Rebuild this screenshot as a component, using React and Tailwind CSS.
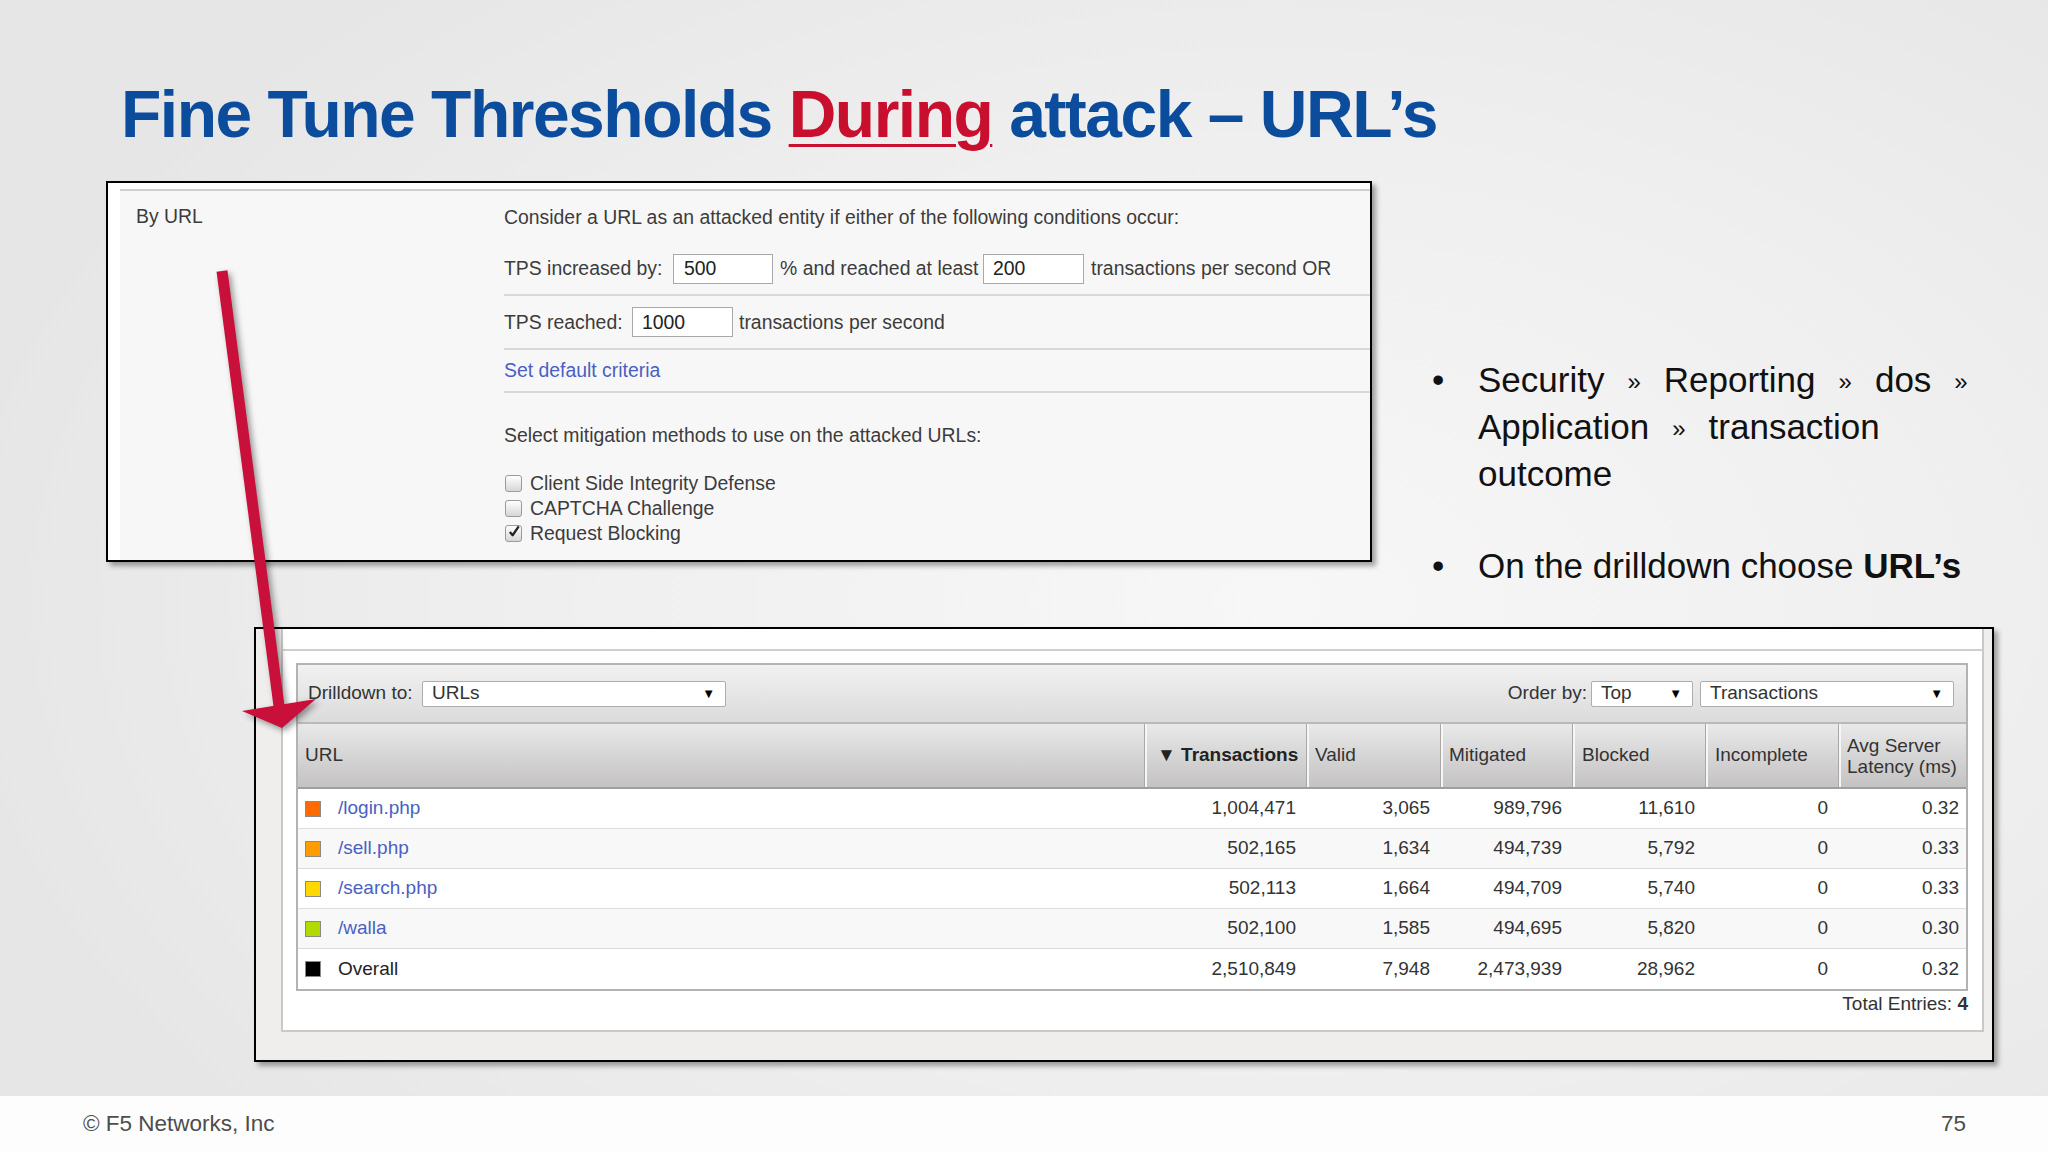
import React from "react";

const rows = [
  { url: "/login.php", color: "bg-[#ff6a00]", link: true, vals: ["1,004,471", "3,065", "989,796", "11,610", "0", "0.32"] },
  { url: "/sell.php", color: "bg-[#ff9c00]", link: true, vals: ["502,165", "1,634", "494,739", "5,792", "0", "0.33"] },
  { url: "/search.php", color: "bg-[#ffd800]", link: true, vals: ["502,113", "1,664", "494,709", "5,740", "0", "0.33"] },
  { url: "/walla", color: "bg-[#b2d900]", link: true, vals: ["502,100", "1,585", "494,695", "5,820", "0", "0.30"] },
  { url: "Overall", color: "bg-black", link: false, vals: ["2,510,849", "7,948", "2,473,939", "28,962", "0", "0.32"] },
];

const colW = ["w-[162px]", "w-[134px]", "w-[132px]", "w-[133px]", "w-[133px]", "w-[128px]"];

const Checkbox = ({ checked }) => (
  <span className="relative w-[17px] h-[17px] rounded-[3px] border border-[#9a9a9a] bg-linear-to-b from-white to-[#d6d6d6] shrink-0">
    {checked && (
      <svg viewBox="0 0 16 16" className="absolute left-[1px] top-[-2px] w-[15px] h-[15px]">
        <path d="M3 8.5 L6 12 L12.5 2.5" fill="none" stroke="#222" strokeWidth="2.4" strokeLinejoin="round" />
      </svg>
    )}
  </span>
);

const Select = ({ value, className }) => (
  <div className={`h-[26px] bg-white border border-[#adadad] rounded-[2px] flex items-center justify-between pl-[9px] pr-[10px] text-[19px] text-[#333] ${className}`}>
    <span>{value}</span>
    <span className="text-[13px] text-black">▼</span>
  </div>
);

const Sep = () => <span className="inline-block mx-[23px] text-[24px] align-[2px]">»</span>;

export default function App() {
  return (
    <div className="relative w-[2048px] h-[1152px] overflow-hidden flex flex-col font-['Liberation_Sans',Arial,sans-serif]">
      <div className="relative h-[1096px] bg-[radial-gradient(ellipse_65%_75%_at_62%_55%,#f7f7f8_0%,#efeff0_55%,#e6e6e7_100%)]">
        {/* title */}
        <h1 className="pt-[81px] pl-[121px] text-[66px] leading-[66px] font-bold tracking-[-1.5px] text-[#0b4c9c]">
          Fine Tune Thresholds{" "}
          <span className="text-[#c8102e] underline decoration-[3px] underline-offset-[7px]">During</span>{" "}
          attack – URL’s
        </h1>

        <div className="flex items-start mt-[34px]">
          {/* By URL panel */}
          <div className="ml-[106px] w-[1266px] h-[381px] border-2 border-black bg-white pl-[12px] pt-[6px] flex shadow-[4px_4px_5px_rgba(0,0,0,0.35)] text-[19.4px] leading-[23px] text-[#3c3c3c] shrink-0">
            <div className="flex-1 flex border-t-2 border-[#cfcfcf] bg-[#f8f7f7]">
              <div className="w-[384px] pt-[14px] pl-[16px]">By URL</div>
              <div className="flex-1 flex flex-col">
                <div className="h-[52px] flex items-center">
                  Consider a URL as an attacked entity if either of the following conditions occur:
                </div>
                <div className="h-[53px] flex items-center border-b-2 border-[#d8d8d8]">
                  <span className="w-[169px]">TPS increased by:</span>
                  <span className="w-[100px] h-[30px] bg-white border border-[#a9a9a9] pl-[10px] flex items-center text-[#222]">500</span>
                  <span className="ml-[7px] w-[203px]">% and reached at least</span>
                  <span className="w-[101px] h-[30px] bg-white border border-[#a9a9a9] pl-[9px] flex items-center text-[#222]">200</span>
                  <span className="ml-[7px]">transactions per second OR</span>
                </div>
                <div className="h-[54px] flex items-center border-b-2 border-[#d8d8d8]">
                  <span className="w-[128px]">TPS reached:</span>
                  <span className="w-[101px] h-[30px] bg-white border border-[#a9a9a9] pl-[9px] flex items-center text-[#222]">1000</span>
                  <span className="ml-[6px]">transactions per second</span>
                </div>
                <div className="h-[43px] flex items-center border-b-2 border-[#d8d8d8] text-[#4a5fc4]">
                  Set default criteria
                </div>
                <div className="pt-[31px]">Select mitigation methods to use on the attacked URLs:</div>
                <div className="mt-[24px] flex flex-col leading-[25px] pl-[1px]">
                  <div className="flex items-center gap-[8px]"><Checkbox />Client Side Integrity Defense</div>
                  <div className="flex items-center gap-[8px]"><Checkbox />CAPTCHA Challenge</div>
                  <div className="flex items-center gap-[8px]"><Checkbox checked />Request Blocking</div>
                </div>
              </div>
            </div>
          </div>

          {/* bullets */}
          <div className="ml-[60px] pt-[176px] text-[35px] leading-[45px] text-[#111]">
            <div className="flex">
              <span className="w-[46px]">•</span>
              <div>
                Security<Sep />Reporting<Sep />dos<Sep />
                <br />
                Application<Sep />transaction
                <br />
                outcome
              </div>
            </div>
            <div className="flex mt-[47px]">
              <span className="w-[46px]">•</span>
              <div>
                On the drilldown choose <span className="font-bold">URL’s</span>
              </div>
            </div>
          </div>
        </div>

        {/* report panel */}
        <div className="mt-[39px] ml-[254px] w-[1740px] h-[435px] border-2 border-black bg-[#efeeed] pl-[25px] pr-[8px] pb-[28px] flex flex-col shadow-[4px_4px_5px_rgba(0,0,0,0.35)] text-[19px] text-[#333]">
          <div className="flex-1 flex flex-col bg-white border-x-2 border-b-2 border-[#c9c9c9]">
            <div className="h-[22px] border-b-2 border-[#cfcfcf]" />
            <div className="mt-[12px] ml-[13px] mr-[14px] flex flex-col">
              <div className="border-2 border-[#b3b3b3] flex flex-col">
                {/* toolbar */}
                <div className="h-[59px] border-b-2 border-[#b9b9b9] bg-linear-to-b from-[#f1f1f1] to-[#dbdbdb] flex items-center justify-between pl-[10px] pr-[12px]">
                  <div className="flex items-center">
                    <span className="w-[114px]">Drilldown to:</span>
                    <Select value="URLs" className="w-[304px]" />
                  </div>
                  <div className="flex items-center">
                    <span className="mr-[4px]">Order by:</span>
                    <Select value="Top" className="w-[102px]" />
                    <Select value="Transactions" className="w-[254px] ml-[7px]" />
                  </div>
                </div>
                {/* header */}
                <div className="h-[65px] border-b-2 border-[#9f9f9f] bg-linear-to-b from-[#e9e9e9] to-[#c4c2c2] flex text-[#333]">
                  <div className="w-[846px] pl-[7px] flex items-center">URL</div>
                  <div className={`${colW[0]} pl-[12px] flex items-center border-l border-[#a8a8a8] shadow-[inset_2px_0_0_#f6f6f6] font-bold text-[#222]`}>▼ Transactions</div>
                  <div className={`${colW[1]} pl-[8px] flex items-center border-l border-[#a8a8a8] shadow-[inset_2px_0_0_#f6f6f6]`}>Valid</div>
                  <div className={`${colW[2]} pl-[8px] flex items-center border-l border-[#a8a8a8] shadow-[inset_2px_0_0_#f6f6f6]`}>Mitigated</div>
                  <div className={`${colW[3]} pl-[9px] flex items-center border-l border-[#a8a8a8] shadow-[inset_2px_0_0_#f6f6f6]`}>Blocked</div>
                  <div className={`${colW[4]} pl-[9px] flex items-center border-l border-[#a8a8a8] shadow-[inset_2px_0_0_#f6f6f6]`}>Incomplete</div>
                  <div className={`${colW[5]} pl-[8px] flex items-center border-l border-[#a8a8a8] shadow-[inset_2px_0_0_#f6f6f6] leading-[21px]`}>
                    Avg Server
                    <br />
                    Latency (ms)
                  </div>
                </div>
                {/* rows */}
                {rows.map((r, i) => (
                  <div
                    key={r.url}
                    className={`h-[40px] flex items-center ${i % 2 ? "bg-[#f8f8f8]" : "bg-white"} ${i < rows.length - 1 ? "border-b border-[#dcdcdc]" : ""}`}
                  >
                    <div className="w-[846px] pl-[7px] flex items-center">
                      <span className={`w-[16px] h-[16px] border border-[#8a8a8a] ${r.color}`} />
                      <span className={`ml-[17px] ${r.link ? "text-[#4a5fc4]" : "text-[#222]"}`}>{r.url}</span>
                    </div>
                    {r.vals.map((v, j) => (
                      <div key={j} className={`${colW[j]} text-right ${j === 5 ? "pr-[7px]" : "pr-[10px]"}`}>
                        {v}
                      </div>
                    ))}
                  </div>
                ))}
              </div>
              <div className="mt-[1px] text-right leading-[23px] text-[#333]">
                Total Entries: <span className="font-bold">4</span>
              </div>
            </div>
          </div>
        </div>
      </div>

      {/* footer */}
      <div className="h-[56px] bg-[#fdfdfd] flex items-center justify-between pl-[83px] pr-[82px] text-[22.5px] text-[#4d4d4d]">
        <span>© F5 Networks, Inc</span>
        <span>75</span>
      </div>

      {/* red arrow */}
      <svg className="absolute left-0 top-0 w-[2048px] h-[1152px] pointer-events-none drop-shadow-[3px_3px_3px_rgba(0,0,0,0.4)]" viewBox="0 0 2048 1152">
        <line x1="222" y1="271" x2="279" y2="706" stroke="#c8103a" strokeWidth="11" />
        <polygon points="242,711 316,699 282,728" fill="#c8103a" />
      </svg>
    </div>
  );
}
